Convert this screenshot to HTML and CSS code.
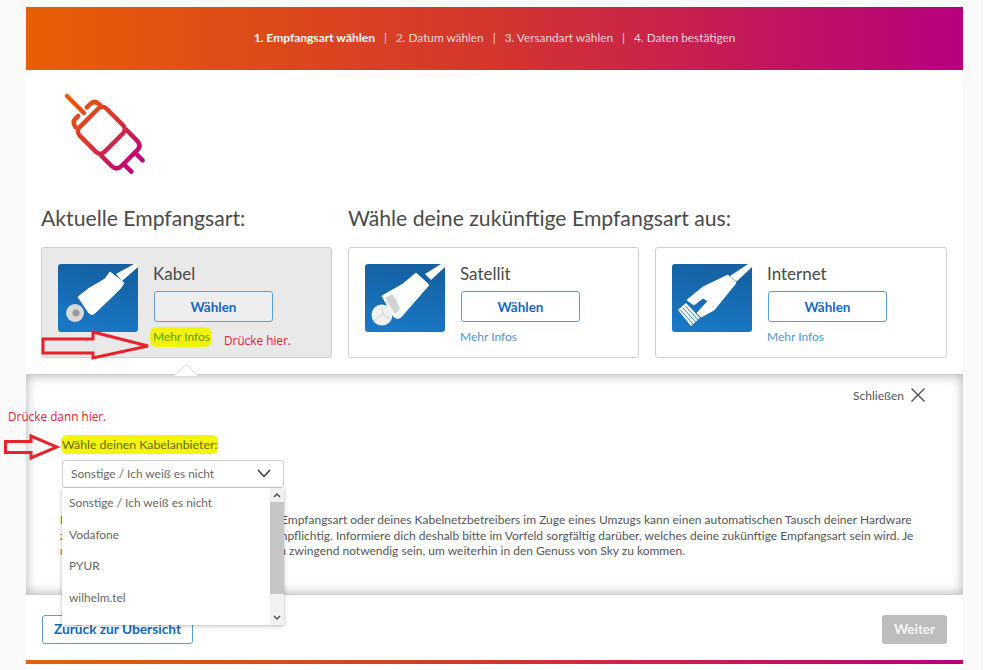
FILE: index.html
```html
<!DOCTYPE html>
<html lang="de">
<head>
<meta charset="utf-8">
<title>Empfangsart wählen</title>
<link rel="stylesheet" href="styles.css">
</head>
<body>
<div class="shell">
  <main class="page">
    <header class="steps">
      <strong class="step-on">1. Empfangsart wählen</strong><span class="sep">|</span><span>2. Datum wählen</span><span class="sep">|</span><span>3. Versandart wählen</span><span class="sep">|</span><span>4. Daten bestätigen</span>
    </header>

    <div class="hero">
      <svg class="plug" width="90" height="90" viewBox="0 0 90 90" fill="none">
        <defs>
          <linearGradient id="pg" gradientUnits="userSpaceOnUse" x1="0" y1="0" x2="100" y2="0">
            <stop offset="0" stop-color="#ea5f08"/>
            <stop offset="0.5" stop-color="#d8352f"/>
            <stop offset="1" stop-color="#c0007e"/>
          </linearGradient>
        </defs>
        <g transform="translate(7 6) rotate(45)" stroke="url(#pg)" stroke-width="4.500" stroke-linecap="round" stroke-linejoin="round">
          <path d="M0 0H24"/>
          <path d="M22 -6V-10Q22 -17 29 -17H31"/>
          <path d="M22 6V10Q22 15 28 16"/>
          <rect x="31" y="-19" width="35" height="38" rx="6"/>
          <path d="M66 -18H81Q88 -18 88 -11V11Q88 18 81 18H66"/>
          <path d="M88 -8H99M88 8H99"/>
        </g>
      </svg>
    </div>

    <div class="titles">
      <h2 class="title title-now">Aktuelle Empfangsart:</h2>
      <h2 class="title">Wähle deine zukünftige Empfangsart aus:</h2>
    </div>

    <section class="cards">
      <article class="card card-now">
        <svg class="thumb" viewBox="0 0 80 68">
          <defs>
            <linearGradient id="bl" x1="0.6" y1="0" x2="0.4" y2="1">
              <stop offset="0" stop-color="#15609f"/>
              <stop offset="1" stop-color="#1a78c6"/>
            </linearGradient>
          </defs>
          <rect width="80" height="68" rx="3" fill="url(#bl)"/>
          <path d="M58 10L76 0H80V3L64 17Z" fill="#fff"/>
          <path d="M20 33L30 25L47 15L52 8L66 19L62 25L37 49Q34 52 31 49Z" fill="#fff" stroke="#fff" stroke-linejoin="round"/>
          <circle cx="17" cy="49" r="9" fill="#d9d9d9"/>
          <circle cx="18" cy="49" r="3.500" fill="#9a9a9a"/>
        </svg>
        <div class="card-body">
          <h3 class="card-name">Kabel</h3>
          <button class="btn btn-pick">Wählen</button>
          <a class="more more-mark">Mehr Infos</a>
        </div>
      </article>
      <article class="card">
        <svg class="thumb" viewBox="0 0 80 68">
          <rect width="80" height="68" rx="3" fill="url(#bl)"/>
          <path d="M60 10L76 0H80V3L66 16Z" fill="#fff"/>
          <path d="M17 32L38 20L51 9L64 21L36 53Q33 56 29 53Z" fill="#fff" stroke="#fff" stroke-linejoin="round"/>
          <path d="M20 34L27 30Q32 36 35 45L30 50Z" fill="#d2d2d2"/>
          <circle cx="17" cy="51" r="10.500" fill="#f1f1f1"/>
          <path d="M17 43L18 50L10 56M18 50L25 55" stroke="#d2d2d2" stroke-width="1" fill="none"/>
        </svg>
        <div class="card-body">
          <h3 class="card-name">Satellit</h3>
          <button class="btn btn-pick">Wählen</button>
          <a class="more">Mehr Infos</a>
        </div>
      </article>
      <article class="card">
        <svg class="thumb" viewBox="0 0 80 68">
          <rect width="80" height="68" rx="3" fill="url(#bl)"/>
          <path d="M58 12L76 0H80V3L64 18Z" fill="#fff"/>
          <path d="M15 36L31 23L56 11L64 19L42 46L29 53L25 49L36 37L31 34L22 41Z" fill="#fff" stroke="#fff" stroke-linejoin="round"/>
          <path d="M6 46L14 39L28 54L19 62Z" fill="#fff"/>
          <path d="M8.500 46L21 60M11 44L23.500 58M13.500 42L26 56" stroke="#1a6cb3" stroke-width="0.900" fill="none"/>
        </svg>
        <div class="card-body">
          <h3 class="card-name">Internet</h3>
          <button class="btn btn-pick">Wählen</button>
          <a class="more">Mehr Infos</a>
        </div>
      </article>
    </section>

    <section class="panel">
      <span class="notch"></span>
      <div class="close-row">
        <span>Schließen</span>
        <svg width="14" height="14" viewBox="0 0 14 14" fill="none" stroke="#4a4a4a" stroke-width="1.300"><path d="M0.500 0.500L13.500 13.500M13.500 0.500L0.500 13.500"/></svg>
      </div>
      <div class="label-row"><label class="field-label">Wähle deinen Kabelanbieter:</label></div>
      <div class="select-wrap">
        <div class="select">
          <span>Sonstige / Ich weiß es nicht</span>
          <svg width="14" height="9" viewBox="0 0 14 9" fill="none" stroke="#333" stroke-width="1.500"><path d="M1 1L7 7.500L13 1"/></svg>
        </div>
        <div class="menu">
          <ul class="menu-list">
            <li>Sonstige / Ich weiß es nicht</li>
            <li>Vodafone</li>
            <li>PYUR</li>
            <li>wilhelm.tel</li>
          </ul>
          <div class="scroll">
            <svg width="14" height="14" viewBox="0 0 14 14" fill="none" stroke="#505050" stroke-width="1.500"><path d="M4 9L7 6L10 9"/></svg>
            <div class="thumb-bar"></div>
            <svg width="14" height="14" viewBox="0 0 14 14" fill="none" stroke="#505050" stroke-width="1.500"><path d="M4 5L7 8L10 5"/></svg>
          </div>
        </div>
      </div>
      <p class="note"><span class="warn">Bitte beachte:</span> Ein Wechsel der bisherigen Empfangsart oder deines Kabelnetzbetreibers im Zuge eines Umzugs kann einen automatischen Tausch deiner Hardware<br><span class="warn">zur</span> Folge haben und ist mitunter gar kostenpflichtig. Informiere dich deshalb bitte im Vorfeld sorgfältig darüber, welches deine zukünftige Empfangsart sein wird. Je<br><span class="warn">nach</span> Empfangsart kann ein Anschluss dann zwingend notwendig sein, um weiterhin in den Genuss von Sky zu kommen.</p>
    </section>

    <footer class="foot">
      <button class="btn btn-back">Zurück zur Übersicht</button>
      <button class="btn btn-next">Weiter</button>
    </footer>
    <div class="rule"></div>
  </main>

  <span class="anno anno-one">Drücke hier.</span>
  <span class="anno anno-two">Drücke dann hier.</span>
  <svg class="arrow arrow-one" width="110" height="30" viewBox="0 0 110 30" fill="none" stroke="#e8212b" stroke-width="3"><path d="M2 9H52V2L107 16L52 28V23H2Z"/></svg>
  <svg class="arrow arrow-two" width="56" height="26" viewBox="0 0 56 26" fill="none" stroke="#e8212b" stroke-width="3"><path d="M1.500 7.500H27V2L53 13L27 24V18.500H1.500Z"/></svg>
</div>
</body>
</html>
```

FILE: styles.css
```css
* { box-sizing: border-box; }
html, body { margin: 0; padding: 0; background: #fff; }
body { font-family: Lato, "Noto Sans", sans-serif; color: #4a4a4a; overflow: hidden; }

.shell {
  position: relative;
  width: 983px;
  height: 670px;
  padding: 7px 20px 0 26px;
  background: #fafafa;
}
.page { width: 937px; height: 663px; background: #fff; display: flex; flex-direction: column; }

.steps {
  height: 63px;
  flex: none;
  display: flex;
  align-items: center;
  justify-content: center;
  gap: 9px;
  padding-bottom: 3px;
  background: linear-gradient(90deg, #e85f05 0%, #d2362f 50%, #b6007d 100%);
  color: #f6d5da;
  font-size: 11.8px;
}
.step-on { color: #fff; font-weight: 700; font-size: 12px; }
.sep { color: #f6d5da; }

.hero { height: 126px; flex: none; padding: 20px 0 0 34px; }
.plug { display: block; }

.titles { display: flex; height: 51px; flex: none; padding: 3px 0 0 15px; }
.title { margin: 0; font-size: 21.2px; font-weight: 400; line-height: 38px; color: #4a4a4a; }
.title-now { width: 307px; }

.cards { display: grid; grid-template-columns: 291px 291px 292px; gap: 16px; padding: 0 16px 0 15px; flex: none; }
.card {
  height: 111px;
  display: flex;
  gap: 15px;
  padding: 16px 0 0 16px;
  background: #fff;
  border: 1px solid #cfcfcf;
  border-radius: 3px;
}
.card-now { background: #e9e9e9; }
.thumb { width: 80px; height: 68px; flex: none; display: block; }
.card-body { display: flex; flex-direction: column; align-items: flex-start; }
.card-name { margin: 0; font-size: 17px; font-weight: 400; line-height: 19px; height: 27px; color: #4a4a4a; }

.btn { font-family: inherit; font-weight: 700; font-size: 13.5px; border-radius: 3px; cursor: pointer; }
.btn-pick { margin-left: 1px; width: 119px; height: 31px; background: #fff; border: 1px solid #5a9fd8; color: #1469c0; }
.card-now .btn-pick { background: #eee; }

.more { margin-top: 7px; font-size: 12px; line-height: 16px; color: #4e95d4; }
.more-mark {
  margin: 5px 0 0 -3px;
  padding: 2px 2px 2px 3px;
  background: #f2f20c;
  color: #5c9a06;
  border-radius: 7px;
}

.panel {
  position: relative;
  height: 221px;
  flex: none;
  margin-top: 16px;
  padding: 0 0 0 35px;
  background: #fff;
  box-shadow: inset 0 0 12px rgba(0,0,0,.32);
  border-top: 1px solid #cdcdcd;
  border-bottom: 1px solid #cdcdcd;
}
.notch {
  position: absolute;
  left: 151px;
  top: -8px;
  width: 18px;
  height: 18px;
  background: #fff;
  transform: rotate(45deg);
  border-left: 1px solid #d8d8d8;
  border-top: 1px solid #d8d8d8;
  clip-path: polygon(0 0, 100% 0, 0 100%);
}
.close-row {
  display: flex;
  justify-content: flex-end;
  align-items: center;
  gap: 7px;
  height: 14px;
  margin: 13px 38px 0 0;
  font-size: 12px;
  color: #555;
}
.label-row { margin-top: 31px; }
.field-label {
  display: inline-block;
  padding: 2px 1px;
  font-size: 12.3px;
  line-height: 15px;
  background: #f5f50c;
  color: #66680a;
  border-radius: 6px;
}
.select-wrap { position: relative; width: 222px; margin: 6px 0 0 1px; }
.select {
  height: 28px;
  display: flex;
  align-items: center;
  justify-content: space-between;
  padding: 0 12px 1px 8px;
  background: #fff;
  border: 1px solid #cfcfcf;
  border-radius: 3px;
  font-size: 11.9px;
  color: #666;
}
.menu {
  position: absolute;
  z-index: 3;
  left: 0;
  top: 28px;
  width: 222px;
  height: 137px;
  display: flex;
  background: #fff;
  box-shadow: 0 1px 4px rgba(0,0,0,.28);
}
.menu-list { flex: 1; margin: 0; padding: 0; list-style: none; font-size: 11.9px; color: #666; }
.menu-list li { height: 31.500px; line-height: 30px; padding-left: 7px; }
.scroll { width: 14px; flex: none; display: flex; flex-direction: column; background: #f1f1f1; }
.scroll svg { flex: none; display: block; }
.thumb-bar { height: 92px; background: #c6c6c6; margin-bottom: 17px; }

.note {
  margin: 24px 0 0 -1px;
  width: 870px;
  font-size: 12px;
  line-height: 15.500px;
  color: #555;
  white-space: nowrap;
}
.warn { color: #e8650a; }

.foot { display: flex; justify-content: space-between; padding: 20px 16px 0 16px; flex: none; height: 65px; }
.btn-back { width: 151px; height: 29px; padding: 0 0 3px; background: #fff; border: 1px solid #5a9fd8; color: #1469c0; font-size: 13.7px; }
.btn-next { width: 65px; height: 29px; padding: 0 0 1px; background: #bdbdbd; border: 0; color: #f4f4f4; }
.rule { height: 4px; flex: none; background: linear-gradient(90deg, #e85f05 0%, #d2362f 50%, #b6007d 100%); }

.anno { position: absolute; z-index: 5; font-family: "Open Sans", sans-serif; font-size: 11.8px; line-height: 16px; color: #e8212b; }
.anno-one { left: 224px; top: 332px; }
.anno-two { left: 8px; top: 408px; }
.arrow { position: absolute; z-index: 5; }
.arrow-one { left: 41px; top: 330px; }
.arrow-two { left: 4px; top: 434px; }
```
